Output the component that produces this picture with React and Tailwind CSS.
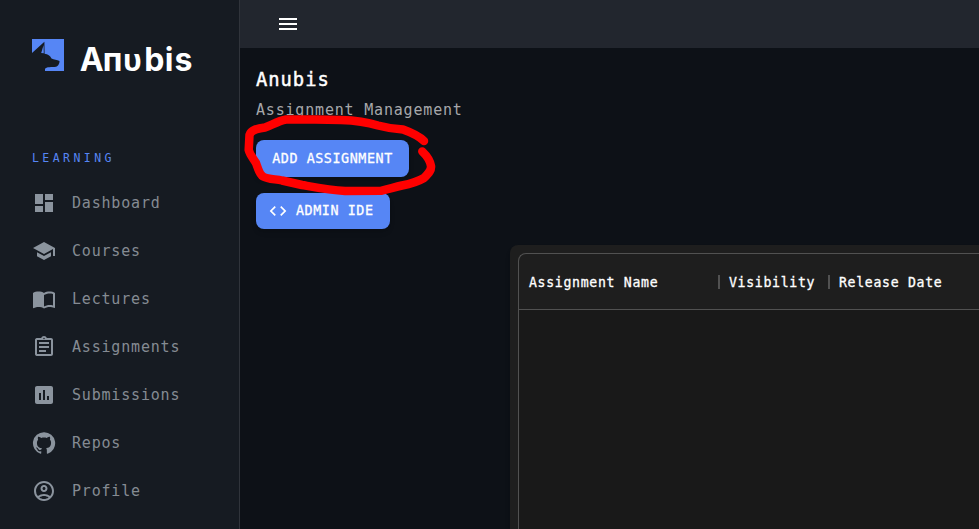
import React from "react";
import {
  MdDashboard,
  MdSchool,
  MdImportContacts,
  MdOutlineAssignment,
  MdAssessment,
  MdOutlineAccountCircle,
  MdCode,
  MdMenu,
} from "react-icons/md";

function GitHubIcon(props) {
  return (
    <svg viewBox="0 0 24 24" fill="currentColor" {...props}>
      <path d="M12 1.27a11 11 0 0 0-3.48 21.46c.55.09.73-.28.73-.55v-1.84c-3.03.64-3.67-1.46-3.67-1.46-.55-1.29-1.28-1.65-1.28-1.65-.92-.65.1-.65.1-.65 1.1 0 1.73 1.1 1.73 1.1.92 1.65 2.57 1.2 3.21.92a2 2 0 0 1 .64-1.47c-2.47-.27-5.04-1.19-5.04-5.5 0-1.1.46-2.1 1.2-2.84a3.76 3.76 0 0 1 0-2.93s.91-.28 3.11 1.1c1.8-.49 3.7-.49 5.5 0 2.1-1.38 3.02-1.1 3.02-1.1a3.76 3.76 0 0 1 .1 2.93c.83.74 1.2 1.74 1.2 2.94 0 4.21-2.57 5.13-5.04 5.4.45.37.82.92.82 2.02v3.03c0 .27.1.64.73.55A11 11 0 0 0 12 1.27" />
    </svg>
  );
}

const navItems = [
  { label: "Dashboard", Icon: MdDashboard },
  { label: "Courses", Icon: MdSchool },
  { label: "Lectures", Icon: MdImportContacts },
  { label: "Assignments", Icon: MdOutlineAssignment },
  { label: "Submissions", Icon: MdAssessment },
  { label: "Repos", Icon: GitHubIcon },
  { label: "Profile", Icon: MdOutlineAccountCircle },
];

const columns = [
  { label: "Assignment Name", width: "w-[200px]", text: "w-[189px]" },
  { label: "Visibility", width: "w-[110px]", text: "w-[99px]" },
  { label: "Release Date", width: "w-[200px]", text: "w-[189px]" },
];

function Logo() {
  return (
    <div className="flex h-12 items-start pl-8">
      <svg className="mt-[7px] h-8 w-8 shrink-0" viewBox="0 0 32 32">
        <rect width="32" height="32" fill="#5686f5" />
        <path
          d="M0 14 L12.4 2.8 L12.6 14.8 C16 15 18 16.8 19.5 19.5 C22 20.8 25 20.5 27.5 22 C27.6 24.5 26 27.4 24 27.8 C20 28.4 14 27.5 13 30 L13 32 L0 32 Z"
          fill="#161b22"
        />
        <path d="M11.6 6 L11.8 14.2 L9.2 14 Z" fill="#5686f5" />
      </svg>
      <svg className="ml-4 h-12 w-[120px]" viewBox="0 0 120 48">
        <text
          x="-0.2 22.8 43 64.2 84.8 94.4"
          y="39.4"
          className="fill-white font-['Inter',sans-serif] text-[32px] font-bold"
        >
          Aпᴜbis
        </text>
      </svg>
    </div>
  );
}

function Sidebar() {
  return (
    <aside className="flex w-60 shrink-0 flex-col border-r border-[#30343b] bg-[#161b22] pt-8">
      <Logo />
      <div className="mt-[69px] h-[18px] pl-8 text-[11.5px] leading-[19px] tracking-[3.45px] text-[#5686f5]">
        LEARNING
      </div>
      <nav className="mt-3 flex flex-col">
        {navItems.map(({ label, Icon }) => (
          <a key={label} className="flex h-12 items-center gap-4 pl-8 text-[#8b949e]">
            <Icon className="h-6 w-6 shrink-0" />
            <span className="text-[15px] leading-6 tracking-[0.81px] text-[#858b93]">{label}</span>
          </a>
        ))}
      </nav>
    </aside>
  );
}

function ScribbleHighlight() {
  return (
    <svg
      className="pointer-events-none absolute top-[110px] left-[240px] h-[90px] w-[200px]"
      viewBox="240 110 200 90"
      fill="none"
      stroke="#ff0000"
      strokeWidth="8.5"
      strokeLinecap="round"
      strokeLinejoin="round"
    >
      <path d="M424 141 C418 135 410 132 403 129.5 C395 129 387 128 378 125.5 C370 123 358 120.5 341 120 L315 119.5 L286 119.5 C278 121 272 125 265 127.5 C257 128.5 251 130 249.5 135 L248.7 150 C250 155 253 158 256 163 C258 168 259 174 263 176.5 C268 179.5 276 179 282 180.5 L302 185 C316 187.5 330 190.3 345 191 L381 190.8 C389 189 395 187 402 185.5 C410 184 418 181.5 424 178 C429 173 431.5 170 431 166 C430 160 426 155 422.3 151.5" />
    </svg>
  );
}

export default function App() {
  return (
    <div className="relative flex h-[529px] w-[979px] overflow-hidden bg-[#0d1117] font-['DejaVu_Sans_Mono',monospace]">
      <Sidebar />
      <div className="flex min-w-0 flex-1 flex-col">
        <header className="flex h-12 shrink-0 items-center bg-[#22262e] pl-9 text-white">
          <MdMenu className="h-6 w-6" />
        </header>
        <main className="flex flex-1 flex-col items-start pt-4 pl-4">
          <h1 className="h-8 text-[18.8px] leading-8 tracking-[0.98px] text-white [-webkit-text-stroke:0.45px_white]">
            Anubis
          </h1>
          <p className="h-7 text-[15px] leading-7 tracking-[0.81px] text-[#a6a7aa]">
            Assignment Management
          </p>
          <button className="mt-4 flex h-[37px] w-[153px] shrink-0 items-center justify-center rounded-lg bg-[#5686f5] pt-0.5 text-[13.4px] tracking-[0.56px] whitespace-nowrap text-white shadow-md [-webkit-text-stroke:0.3px_white]">
            ADD ASSIGNMENT
          </button>
          <button className="mt-4 flex h-9 w-[134px] shrink-0 items-center gap-2 rounded-lg bg-[#5686f5] pl-3 text-[13.4px] tracking-[0.56px] whitespace-nowrap text-white shadow-md [-webkit-text-stroke:0.3px_white]">
            <MdCode className="h-5 w-5 shrink-0" strokeWidth="0" />
            <span className="pt-px">ADMIN IDE</span>
          </button>
          <section className="mt-4 ml-[254px] w-[600px] flex-1 rounded-tl-lg bg-[#1e1e1e] pt-2 pl-2 shadow-md">
            <div className="flex h-full flex-col overflow-hidden rounded-tl-lg border-t border-l border-[#515151]">
              <div className="flex h-14 shrink-0 items-center border-b border-[#515151] pl-2.5">
                {columns.map(({ label, width, text }) => (
                  <div key={label} className={`flex shrink-0 items-center ${width}`}>
                    <span
                      className={`pt-0.5 text-[13.2px] leading-6 tracking-[0.68px] text-white [-webkit-text-stroke:0.3px_white] ${text}`}
                    >
                      {label}
                    </span>
                    <span className="h-3.5 w-0.5 bg-[#515151]" />
                  </div>
                ))}
              </div>
              <div className="flex-1 bg-[#191919]" />
            </div>
          </section>
        </main>
      </div>
      <ScribbleHighlight />
    </div>
  );
}
